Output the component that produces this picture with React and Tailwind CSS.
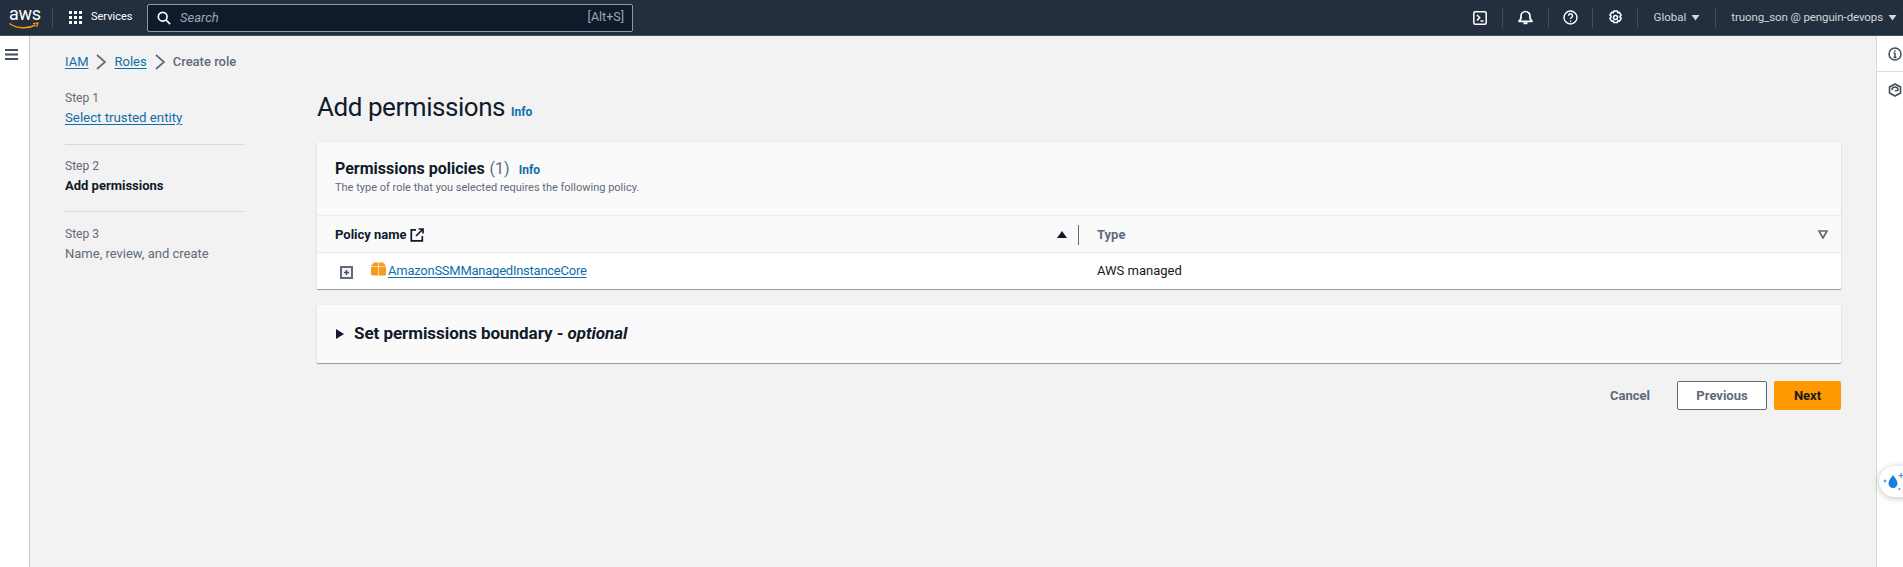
import React from "react";

const Sep = () => <div className="w-px h-[20px] bg-[#414d5c]" />;
const Caret = () => (
  <svg width="9" height="7" viewBox="0 0 9 7" className="ml-[5px]"><path d="M0.500 1h8L4.500 6.500z" fill="#d1d5db" /></svg>
);
const Chevron = () => (
  <svg width="12" height="18" viewBox="0 0 12 18" fill="none" stroke="#5f6b7a" strokeWidth="1.700"><path d="M2 2l8 7-8 7" /></svg>
);

function Header() {
  return (
    <header className="h-[36px] shrink-0 bg-[#232f3e] border-b border-[#414d5c] flex items-center text-[#d1d5db] text-[11.500px]">
      <div className="w-[45px] ml-[7px] h-[26px] relative text-white">
        <span className="block text-[18px] leading-[17px] tracking-[-0.3px] font-normal pl-[2px]">aws</span>
        <svg width="30" height="9" viewBox="0 0 30 9" className="absolute left-[2px] top-[17px]">
          <path d="M0.500 1.500C8 7 19 7 26.500 3" fill="none" stroke="#f90" strokeWidth="1.500" />
          <path d="M24 1.500l5-.5-1.500 4" fill="none" stroke="#f90" strokeWidth="1.200" />
        </svg>
      </div>
      <div className="w-px h-[20px] bg-[#414d5c] mr-[16px]" />
      <div className="grid grid-cols-3 gap-[2px] w-[13px] mr-[9px]">
        {[0,1,2,3,4,5,6,7,8].map((i) => <span key={i} className="w-[3px] h-[3px] bg-white" />)}
      </div>
      <span className="text-[11px] text-white w-[41px] whitespace-nowrap">Services</span>
      <div className="ml-[15px] w-[486px] h-[28px] bg-[#0f1b2a] border border-[#8d99a8] rounded-[2px] flex items-center pl-[9px] pr-[8px]">
        <svg width="14" height="14" viewBox="0 0 16 16" fill="none" stroke="#fff" strokeWidth="1.900"><circle cx="6.500" cy="6.500" r="5" /><path d="M10.200 10.200L15 15" /></svg>
        <span className="ml-[9px] italic text-[#9ba7b6] text-[13px]">Search</span>
        <span className="ml-auto text-[#9ba7b6] text-[12.500px]">[Alt+S]</span>
      </div>
      <div className="ml-auto flex items-center">
        <svg width="14" height="14" viewBox="0 0 14 14" fill="none" stroke="#fff" strokeWidth="1.500" className="mr-[15px]"><rect x="0.800" y="0.800" width="12.400" height="12.400" rx="1.500" /><path d="M4 4l2.700 2.800L4 9.600" /><path d="M7.500 10h3" /></svg>
        <Sep />
        <svg width="15" height="15" viewBox="0 0 15 15" fill="none" stroke="#fff" strokeWidth="1.700" className="ml-[15px] mr-[15px]"><path d="M1 11.300h13L12 8.500V6a4.500 4.500 0 00-9 0v2.500z" strokeLinejoin="round" /><path d="M5.500 13.200h4" strokeWidth="2" /></svg>
        <Sep />
        <svg width="15" height="15" viewBox="0 0 15 15" fill="none" stroke="#fff" strokeWidth="1.400" className="ml-[14px] mr-[14px]"><circle cx="7.500" cy="7.500" r="6.500" /><path d="M5.500 5.800a2 2 0 113 1.700c-.7.400-1 .8-1 1.600" /><path d="M7.500 10.500v1.300" /></svg>
        <Sep />
        <svg width="15" height="15" viewBox="0 0 15 15" fill="none" stroke="#fff" strokeWidth="1.500" className="ml-[15px] mr-[14px]"><circle cx="7.500" cy="7.500" r="2" /><path d="M5.800 1h3.400l.5 1.700 1.700-.4 1.700 2.900-1.200 1.300.1.500 1.200 1.300-1.700 2.900-1.700-.4-.5 1.700H5.800l-.5-1.700-1.700.4-1.700-2.900 1.200-1.300v-1L1.900 5.200l1.700-2.900 1.700.4z" strokeLinejoin="round" /></svg>
        <Sep />
        <span className="ml-[16px] flex items-center">Global<Caret /></span>
        <div className="w-px h-[20px] bg-[#414d5c] ml-[15px]" />
        <span className="ml-[15px] mr-[6px] flex items-center tracking-[-0.1px]">truong_son @ penguin-devops<Caret /></span>
      </div>
    </header>
  );
}

function Steps() {
  return (
    <nav className="w-[180px] text-[13px] leading-[20px]">
      <div className="pb-[16px] border-b border-[#d5dbdb]">
        <div className="text-[#5f6b7a] text-[12px]">Step 1</div>
        <a className="underline underline-offset-2 text-[#0f6fa8] block text-[13.250px]">Select trusted entity</a>
      </div>
      <div className="pt-[11px] pb-[15px] border-b border-[#d5dbdb]">
        <div className="text-[#5f6b7a] text-[12px]">Step 2</div>
        <div className="font-bold text-[#0f1b2a]">Add permissions</div>
      </div>
      <div className="pt-[12px]">
        <div className="text-[#5f6b7a] text-[12px]">Step 3</div>
        <div className="text-[#5f6b7a]">Name, review, and create</div>
      </div>
    </nav>
  );
}

function Policies() {
  return (
    <section className="bg-white shadow-[0_1px_1px_#8d99a8,0_0_1px_#c6c6cd] rounded-[1px]">
      <div className="bg-[#fafafa] h-[74px] pt-[17px] px-[18px] border-b border-[#eaeded]">
        <div className="flex items-baseline leading-[20px]">
          <h2 className="text-[16px] font-bold text-[#0f1b2a]">Permissions policies</h2>
          <span className="ml-[5px] text-[16px] text-[#5f6b7a]">(1)</span>
          <a className="ml-[9px] text-[12px] font-bold text-[#0f6fa8]">Info</a>
        </div>
        <p className="text-[11px] leading-[16px] text-[#5f6b7a]">The type of role that you selected requires the following policy.</p>
      </div>
      <div className="bg-[#fafafa] h-[37px] pt-[1px] flex items-center border-b border-[#eaeded] text-[13px] font-bold">
        <div className="w-[740px] pl-[18px] flex items-center text-[#0f1b2a] shrink-0">
          Policy name
          <svg width="14" height="14" viewBox="0 0 14 14" fill="none" stroke="#0f1b2a" strokeWidth="1.700" className="ml-[3px]"><path d="M6 1.800H1.300v11h11V8" /><path d="M6 8l6.500-6.500M8.500 1h4.500v4.500" /></svg>
        </div>
        <svg width="10" height="7" viewBox="0 0 10 7" className="shrink-0"><path d="M5 0l5 7H0z" fill="#0f1b2a" /></svg>
        <div className="w-px h-[20px] bg-[#5f6b7a] ml-[11px] shrink-0" />
        <span className="ml-[18px] text-[#5f6b7a]">Type</span>
        <svg width="10" height="9" viewBox="0 0 10 9" fill="none" stroke="#5f6b7a" strokeWidth="1.700" className="ml-auto mr-[13px]"><path d="M1 1h8L5 8z" /></svg>
      </div>
      <div className="h-[36px] flex items-center text-[13px]">
        <div className="w-[780px] flex items-center shrink-0">
          <span className="ml-[23px] w-[13px] h-[13px] border-2 border-[#5f6b7a] bg-[#f2f2f2] flex items-center justify-center shrink-0 mt-[2px]">
            <svg width="7" height="7" viewBox="0 0 7 7" stroke="#414d5c" strokeWidth="1.400"><path d="M1 3.500h5M3.500 1v5" /></svg>
          </span>
          <svg width="15" height="14" viewBox="0 0 15 14" className="ml-[18px] -mt-[5px] shrink-0"><path d="M3 .5h9l3 3.500v8a1.500 1.500 0 01-1.500 1.500h-12A1.500 1.500 0 010 12V4z" fill="#f79a1e" /><path d="M0 4.500h15M7.500 .5v13" stroke="#fdd9a5" strokeWidth="1" /></svg>
          <a className="ml-[2px] text-[#0f6fa8] underline underline-offset-2 tracking-[-0.25px]">AmazonSSMManagedInstanceCore</a>
        </div>
        <span className="text-[#16191f]">AWS managed</span>
      </div>
    </section>
  );
}

export default function App() {
  return (
    <div className="w-[1903px] h-[567px] overflow-hidden flex flex-col bg-[#f2f2f2] font-['Roboto',sans-serif]">
      <Header />
      <div className="flex flex-1 min-h-0">
        <aside className="w-[30px] shrink-0 bg-white border-r border-[#c6c6cd] pt-[13px] pl-[5px]">
          <svg width="13" height="11" viewBox="0 0 13 11" stroke="#414d5c" strokeWidth="1.900"><path d="M0 1h13M0 5.500h13M0 10h13" /></svg>
        </aside>
        <main className="flex-1 min-w-0 pl-[35px] pt-[16px]">
          <div className="flex items-center gap-[7px] text-[13px] h-[20px]">
            <a className="text-[#0f6fa8] underline underline-offset-2">IAM</a>
            <Chevron />
            <a className="text-[#0f6fa8] underline underline-offset-2">Roles</a>
            <Chevron />
            <span className="font-medium text-[#5f6b7a]">Create role</span>
          </div>
          <div className="flex mt-[16px]">
            <Steps />
            <div className="ml-[72px] w-[1524px] shrink-0">
              <div className="flex items-baseline -mt-[1px] h-[40px] leading-[40px]">
                <h1 className="text-[26px] tracking-[-0.45px] text-[#0f1b2a] font-normal">Add permissions</h1>
                <a className="ml-[6px] text-[12px] font-bold text-[#0f6fa8]">Info</a>
              </div>
              <div className="mt-[15px]"><Policies /></div>
              <section className="mt-[16px] h-[58px] bg-[#fafafa] shadow-[0_1px_1px_#8d99a8,0_0_1px_#c6c6cd] rounded-[1px] flex items-center pl-[19px]">
                <svg width="8" height="10" viewBox="0 0 8 10"><path d="M0 0l8 5-8 5z" fill="#0f1b2a" /></svg>
                <h2 className="ml-[10px] text-[17px] tracking-[-0.05px] font-bold text-[#0f1b2a]">Set permissions boundary - <i>optional</i></h2>
              </section>
              <div className="mt-[18px] flex items-center justify-end">
                <span className="text-[13px] font-bold text-[#5f6b7a]">Cancel</span>
                <button className="ml-[27px] w-[90px] h-[29px] bg-white border border-[#5f6b7a] rounded-[2px] text-[13px] font-bold text-[#5f6b7a]">Previous</button>
                <button className="ml-[7px] w-[67px] h-[29px] bg-[#ff9900] rounded-[2px] text-[13px] font-bold text-[#16191f]">Next</button>
              </div>
            </div>
          </div>
        </main>
        <aside className="w-[27px] shrink-0 bg-white border-l border-[#d5dbdb] relative">
          <div className="h-[36px] border-b border-[#d5dbdb] flex items-center pl-[11px]">
            <svg width="14" height="14" viewBox="0 0 14 14" fill="none" stroke="#414d5c" strokeWidth="1.500"><circle cx="7" cy="7" r="6" /><path d="M7 6v4.500M5.500 6H7M5.500 10.500h3M7 3.300v1.400" /></svg>
          </div>
          <div className="pt-[11px] pl-[11px]">
            <svg width="14" height="14" viewBox="0 0 14 14" fill="none" stroke="#414d5c" strokeWidth="1.600"><path d="M7 1l5.500 3v6L7 13l-5.500-3V4z" strokeLinejoin="round" /><path d="M4 7a3 3 0 116 0 3 3 0 01-3 .5" /></svg>
          </div>
          <div className="absolute left-[2px] top-[430px] w-[40px] h-[31px] rounded-l-full bg-white shadow-[0_1px_6px_rgba(0,0,0,0.25)] flex items-center pl-[4px]">
            <svg width="22" height="24" viewBox="0 0 22 24" fill="#1a7fe0"><path d="M10 5c2.700 3.500 4.500 5.800 4.500 8.500a4.500 4.500 0 01-9 0C5.500 10.800 7.300 8.500 10 5z" /><path d="M18 3v5M15.500 5.500h5M2 9.500v3M.5 11h3" stroke="#3b93e8" strokeWidth="1.200" /><circle cx="16.500" cy="19" r="1" fill="#3b93e8" /></svg>
          </div>
        </aside>
      </div>
    </div>
  );
}
